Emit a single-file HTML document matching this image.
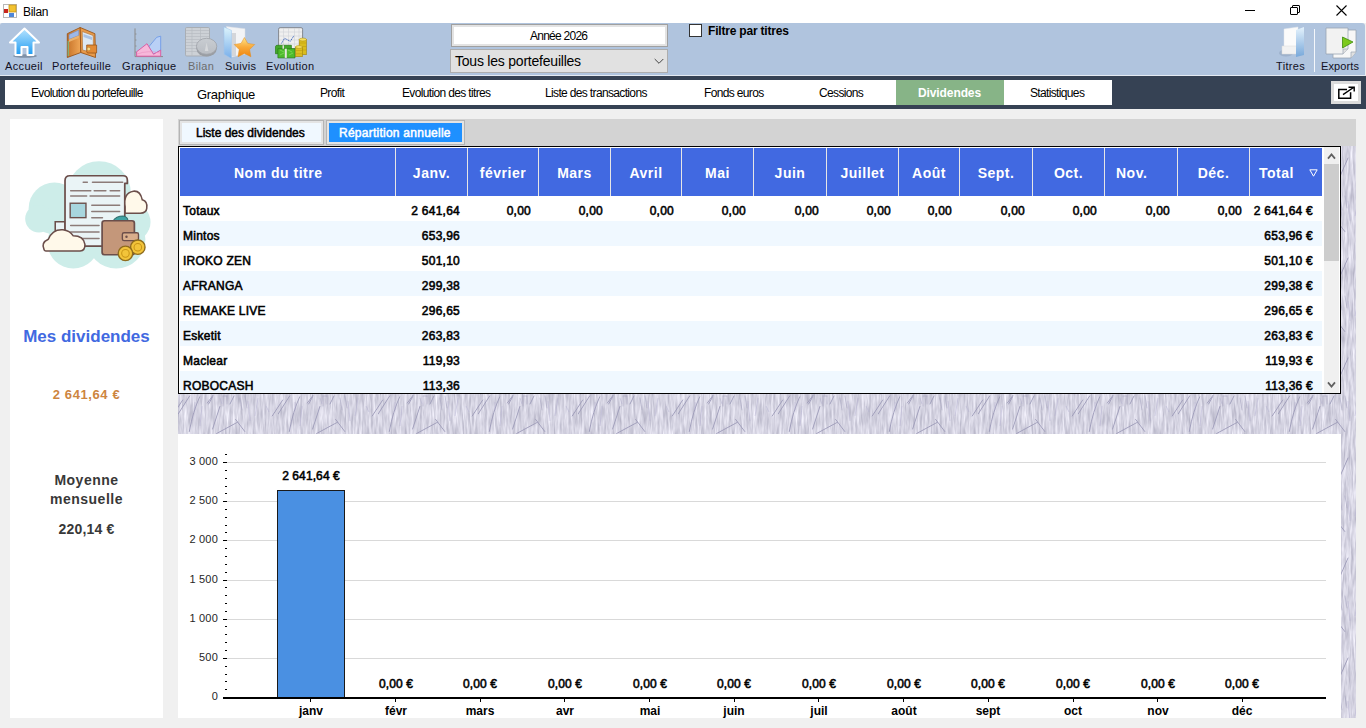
<!DOCTYPE html>
<html><head><meta charset="utf-8">
<style>
*{margin:0;padding:0;box-sizing:border-box}
html,body{width:1366px;height:728px;overflow:hidden;background:#F0F0F0;font-family:"Liberation Sans",sans-serif;position:relative}
.a{position:absolute}
.tl{top:59px;font-size:11px;line-height:14px;color:#101024;white-space:nowrap;letter-spacing:0.35px}
.tt{top:80px;height:25px;line-height:27px;font-size:12px;color:#000;white-space:nowrap;letter-spacing:-0.65px}
.tex{background:#D5D3E6}
.hd{height:48px;line-height:50px;font-size:14px;font-weight:bold;color:#fff;white-space:nowrap;letter-spacing:0.5px}
.cl{height:25px;line-height:31px;font-size:12px;color:#000;white-space:nowrap;-webkit-text-stroke:0.55px #000;letter-spacing:0.25px}
.yl{width:100px;text-align:right;font-size:11px;line-height:14px;color:#262626;white-space:nowrap;letter-spacing:0.2px}
.xl{width:100px;text-align:center;font-size:12px;line-height:14px;font-weight:bold;color:#000;white-space:nowrap}
.vl{width:100px;text-align:center;font-size:12px;line-height:14px;color:#000;white-space:nowrap;-webkit-text-stroke:0.55px #000;letter-spacing:0.1px}

</style></head><body>
<!-- TITLE BAR -->
<div class="a" style="left:0;top:0;width:1366px;height:23px;background:#fff"></div>
<svg class="a" style="left:3px;top:4px" width="14" height="14" viewBox="0 0 14 14">
<rect x="0.5" y="0.5" width="13" height="13" fill="#fff" stroke="#B8B8B8"/>
<rect x="6" y="1" width="7" height="7" fill="#F2C230" stroke="#C8961A" stroke-width="0.8"/>
<rect x="1" y="5" width="4" height="4" fill="#C8261E"/>
<rect x="6" y="9" width="5" height="4" fill="#4E86D8"/>
</svg>
<div class="a" style="left:23px;top:5px;font-size:12px;line-height:15px;color:#000;letter-spacing:-0.3px">Bilan</div>
<div class="a" style="left:1245px;top:10px;width:10px;height:1px;background:#000"></div>
<div class="a" style="left:1292px;top:5px;width:8px;height:8px;border:1px solid #000;border-radius:1px"></div>
<div class="a" style="left:1290px;top:7px;width:8px;height:8px;border:1px solid #000;background:#fff;border-radius:1px"></div>
<svg class="a" style="left:1336px;top:5px" width="11" height="11" viewBox="0 0 11 11"><path d="M0.5 0.5L10.5 10.5M10.5 0.5L0.5 10.5" stroke="#000" stroke-width="1.1"/></svg>

<!-- TOOLBAR -->
<div class="a" style="left:0;top:23px;width:1365px;height:52px;background:#B0C4DE;border-radius:2px 3px 0 0"></div>
<div class="a" style="left:0;top:75px;width:1366px;height:1px;background:#E4EAF2"></div>
<div class="a tl" style="left:5px">Accueil</div>
<div class="a tl" style="left:52px">Portefeuille</div>
<div class="a tl" style="left:122px">Graphique</div>
<div class="a tl" style="left:188px;color:#6D6D6D">Bilan</div>
<div class="a tl" style="left:225px">Suivis</div>
<div class="a tl" style="left:266px">Evolution</div>
<div class="a tl" style="left:1276px">Titres</div>
<div class="a tl" style="left:1321px;letter-spacing:0.1px">Exports</div>
<div class="a" style="left:1314px;top:29px;width:1px;height:43px;background:#F4F7FB"></div>
<!-- house -->
<svg class="a" style="left:8px;top:27px" width="33" height="31" viewBox="0 0 33 31">
<defs><linearGradient id="hg" x1="0" y1="0" x2="0" y2="1"><stop offset="0" stop-color="#B8E4FF"/><stop offset="1" stop-color="#1F9CF2"/></linearGradient></defs>
<ellipse cx="17" cy="29" rx="12" ry="1.8" fill="#5F6F84" opacity="0.6"/>
<path d="M16.5 1.5L31 15.5H25.5V28H19.5V20H13.5V28H7.5V15.5H2Z" fill="url(#hg)" stroke="#fff" stroke-width="2" stroke-linejoin="round"/>
</svg>
<!-- wallet -->
<svg class="a" style="left:66px;top:27px" width="32" height="32" viewBox="0 0 32 32">
<defs><linearGradient id="wg" x1="0" y1="0" x2="1" y2="0"><stop offset="0" stop-color="#C8742A"/><stop offset="1" stop-color="#F0A858"/></linearGradient></defs>
<path d="M1.3 6.7L14.2 0.5L14.8 25.5L1.3 30.5Z" fill="url(#wg)" stroke="#9A5518" stroke-width="0.9" stroke-linejoin="round"/>
<path d="M14.2 0.5L28.9 6.7L29.5 30.5L14.8 25.5Z" fill="#E89A4A" stroke="#9A5518" stroke-width="0.9" stroke-linejoin="round"/>
<path d="M3 7.5L12.8 3V8.5L3 12.5Z" fill="#9DB8E8" stroke="#6A7FB0" stroke-width="0.5"/>
<path d="M3 12.5L12.8 8.5V11L3 15Z" fill="#E9B26E"/>
<path d="M2.3 14V29" stroke="#7FB07A" stroke-width="1.3"/>
<path d="M16.2 4.5L27.2 8.5L27.5 26L16.6 23Z" fill="#DDE8F3" stroke="#B07840" stroke-width="0.7"/>
<path d="M17.5 7L26 10V13L17.5 10Z" fill="#A9C2E4"/>
<path d="M20.7 18H30.6V26H22Q20.7 26 20.7 24.5Z" fill="#E38A34" stroke="#9A5518" stroke-width="0.8"/>
<circle cx="22.8" cy="22" r="1.8" fill="#F4D88A" stroke="#B08030" stroke-width="0.5"/>
</svg>
<!-- graphique -->
<svg class="a" style="left:134px;top:28px" width="30" height="30" viewBox="0 0 30 30">
<path d="M1 0.4V28.6H29" stroke="#8A8A8A" stroke-width="1" fill="none"/>
<path d="M1 6H2.5M1 12H2.5M1 18H2.5M1 24H2.5" stroke="#8A8A8A" stroke-width="0.8"/>
<path d="M14.6 19L22.7 9.3L26.7 8.2V22.2L19.5 26.2Z" fill="#B9D0F6" stroke="#6F9BE6" stroke-width="0.9" stroke-linejoin="round"/>
<path d="M2.6 23.8L13 15.7L19.5 26.2L26.7 22.2V28.2H2.6Z" fill="#F6B8DA" stroke="#D9559E" stroke-width="0.9" stroke-linejoin="round"/>
<path d="M3 26Q14 22 26 25" stroke="#E98FC0" stroke-width="0.6" fill="none"/>
</svg>
<!-- bilan (grayed) -->
<svg class="a" style="left:185px;top:27px" width="33" height="31" viewBox="0 0 33 31">
<defs><linearGradient id="bg1" x1="0" y1="0" x2="0" y2="1"><stop offset="0" stop-color="#C9CDD2"/><stop offset="1" stop-color="#B9BDC3"/></linearGradient></defs>
<rect x="0.5" y="0.5" width="24" height="28.5" rx="1.2" fill="#CDD1D6" stroke="#A6AAB0" stroke-width="0.9"/>
<path d="M1 3.5H24M1 6.5H24M1 9.5H24M1 12.5H24M1 15.5H24M1 18.5H24M1 21.5H24M1 24.5H24M7 1V29M15.5 1V29" stroke="#B8BCC2" stroke-width="0.7"/>
<ellipse cx="21.6" cy="21.5" rx="10.2" ry="8" fill="#9A9EA4"/>
<ellipse cx="21.6" cy="19.3" rx="10.2" ry="8" fill="url(#bg1)" stroke="#9EA2A8" stroke-width="0.8"/>
<path d="M21.6 15.5L19.8 24H23.4Z" fill="#D6D8DB"/>
</svg>
<!-- suivis -->
<svg class="a" style="left:223px;top:26px" width="33" height="34" viewBox="0 0 33 34">
<defs><linearGradient id="sg1" x1="0" y1="0" x2="0" y2="1"><stop offset="0" stop-color="#DDF4FC"/><stop offset="1" stop-color="#78AEEA"/></linearGradient>
<linearGradient id="sg2" x1="0" y1="0" x2="0" y2="1"><stop offset="0" stop-color="#FFE68A"/><stop offset="0.5" stop-color="#F9A93A"/><stop offset="1" stop-color="#EE8510"/></linearGradient></defs>
<path d="M3.3 0.6L22 2.7V28L8.5 31Z" fill="#F3F4F6" stroke="#DADDE2" stroke-width="0.5"/>
<path d="M8.5 7H13V30H8.5Z" fill="#D4D6DA"/>
<path d="M0.9 0.9L8.5 4.4V32.6L1.2 28.2Z" fill="url(#sg1)" stroke="#9CC4EE" stroke-width="0.5"/>
<path d="M21.4 11.5L24.7 17.4L31.7 18.5L26.6 23.6L27.9 30.8L21.4 27.4L15 30.8L16.2 23.6L11.2 18.5L18.1 17.4Z" fill="url(#sg2)" stroke="#E38C1E" stroke-width="0.5" stroke-linejoin="round"/>
</svg>
<!-- evolution -->
<svg class="a" style="left:275px;top:27px" width="33" height="32" viewBox="0 0 33 32">
<rect x="3.6" y="0.7" width="24" height="21" rx="1.5" fill="#EFEFEF" stroke="#7A7E84" stroke-width="0.9"/>
<path d="M4 5H27M4 9H27M4 13H27M4 17H27M8.5 1V21M13.5 1V21M19.5 1V21M24 1V21" stroke="#CFD2D6" stroke-width="0.6"/>
<path d="M6.4 16.5L9.6 11.3L15.3 14.3L18.8 8.9" stroke="#4A6FC0" stroke-width="1" stroke-dasharray="1.4 0.6" fill="none"/>
<path d="M0.4 19.5Q1 18.3 2 18.3H16.4V26.7H0.4Z" fill="#43A82A" stroke="#2A7A18" stroke-width="0.7"/>
<path d="M2.9 21.7H20V30.9H2.9Z" fill="#4DBB2C" stroke="#2A7A18" stroke-width="0.7"/>
<path d="M5 23L9 25M13 23L17 25M5 28L9 26M14 28L18 26" stroke="#7FDA5A" stroke-width="0.8"/>
<path d="M9.8 21.7H11.8V30.9H9.8Z" fill="#E8E8E0"/>
<path d="M7.5 18.3H9V21.7H7.5Z" fill="#E0E0D8"/>
<rect x="24.2" y="12.5" width="7.2" height="15.2" fill="#D9BC1C" stroke="#A08410" stroke-width="0.6"/>
<ellipse cx="27.8" cy="12.5" rx="3.6" ry="1.5" fill="#F6E060" stroke="#A08410" stroke-width="0.5"/>
<path d="M24.2 16H31.4M24.2 19.5H31.4M24.2 23H31.4" stroke="#B8980E" stroke-width="0.5"/>
<rect x="20.5" y="20" width="6.9" height="9.7" fill="#DDBE20" stroke="#A08410" stroke-width="0.6"/>
<ellipse cx="23.95" cy="20" rx="3.45" ry="1.4" fill="#F6E060" stroke="#A08410" stroke-width="0.5"/>
<path d="M20.5 23.5H27.4M20.5 26.8H27.4" stroke="#B8980E" stroke-width="0.5"/>
</svg>
<!-- titres -->
<svg class="a" style="left:1275px;top:26px" width="31" height="33" viewBox="0 0 31 33">
<defs><linearGradient id="tg" x1="0" y1="0" x2="0" y2="1"><stop offset="0" stop-color="#E4F2FC"/><stop offset="1" stop-color="#78A8DA"/></linearGradient></defs>
<ellipse cx="11" cy="27" rx="7" ry="3.5" fill="#7F93AD" opacity="0.35"/>
<path d="M9 3L23 1V22H9Z" fill="#FBFBFB" stroke="#E2E6EA" stroke-width="0.5"/>
<path d="M7 20H22V28H7Z" fill="#F2F2F2" stroke="#DADADA" stroke-width="0.5"/>
<path d="M21 4L29 1V29L21 31Z" fill="url(#tg)"/>
</svg>
<!-- exports -->
<svg class="a" style="left:1325px;top:27px" width="33" height="32" viewBox="0 0 33 32">
<path d="M8 3H31V25L26 31H8Z" fill="#F7F7F7" stroke="#9AA5B2" stroke-width="0.8"/>
<path d="M1 1H23V22L18 27H1Z" fill="#F2F2F2" stroke="#9AA5B2" stroke-width="0.8"/>
<path d="M18 27V22H23" fill="#E0E0E0" stroke="#9AA5B2" stroke-width="0.7"/>
<path d="M26 31V25H31" fill="#E0E0E0" stroke="#9AA5B2" stroke-width="0.7"/>
<path d="M17.5 10L28 15L17.5 21Z" fill="#7BC91C" stroke="#3E8A10" stroke-width="0.8"/>
</svg>
<!-- year textbox -->
<div class="a" style="left:451px;top:24px;width:217px;height:23px;border:1px solid #A0A0A0;background:#fff;box-shadow:inset 0 0 0 2px #E3E3E3"></div>
<div class="a" style="left:530px;top:29px;font-size:12px;line-height:15px;letter-spacing:-0.75px;color:#000">Année 2026</div>
<!-- combo -->
<div class="a" style="left:450px;top:49px;width:218px;height:24px;border:1px solid #ADADAD;background:#E1E1E1"></div>
<div class="a" style="left:455px;top:53px;font-size:14px;line-height:17px;letter-spacing:-0.22px;color:#000;white-space:nowrap">Tous les portefeuilles</div>
<svg class="a" style="left:654px;top:58px" width="10" height="7" viewBox="0 0 10 7"><path d="M0.7 1L5 5.3L9.3 1" stroke="#444" stroke-width="1" fill="none"/></svg>
<!-- checkbox -->
<div class="a" style="left:689px;top:24px;width:13px;height:13px;border:1px solid #333;background:#fff"></div>
<div class="a" style="left:708px;top:24px;font-size:12px;line-height:14px;font-weight:bold;letter-spacing:-0.2px;color:#000;white-space:nowrap">Filtre par titres</div>

<!-- DARK BAR + TABS -->
<div class="a" style="left:0;top:76px;width:1366px;height:33px;background:#364254"></div>
<div class="a" style="left:5px;top:80px;width:1107px;height:25px;background:#fff"></div>
<div class="a" style="left:896px;top:80px;width:108px;height:25px;background:#87B487"></div>
<div class="a tt" style="left:31px">Evolution du portefeuille</div>
<div class="a tt" style="left:197px;font-size:13px;letter-spacing:-0.3px;top:81px">Graphique</div>
<div class="a tt" style="left:320px">Profit</div>
<div class="a tt" style="left:402px">Evolution des titres</div>
<div class="a tt" style="left:545px">Liste des transactions</div>
<div class="a tt" style="left:704px">Fonds euros</div>
<div class="a tt" style="left:819px">Cessions</div>
<div class="a tt" style="left:918px;color:#fff;font-weight:bold;letter-spacing:-0.1px">Dividendes</div>
<div class="a tt" style="left:1030px">Statistiques</div>
<!-- export btn -->
<div class="a" style="left:1331px;top:81px;width:30px;height:23px;background:#fff;border:3px solid #DCDCDC"></div>
<svg class="a" style="left:1337px;top:86px" width="19" height="14" viewBox="0 0 19 14">
<path d="M10 3.5H1.8V12.2H13.6V6.2" stroke="#000" stroke-width="1.5" fill="none"/>
<path d="M6 8.7L16.5 1.5M11.5 1.3H17.2V5.6" stroke="#000" stroke-width="1.4" fill="none"/>
</svg>
<div class="a" style="left:10px;top:119px;width:153px;height:599px;background:#fff"></div>
<svg class="a" style="left:20px;top:150px" width="140" height="125" viewBox="0 0 815 728">
<g fill="#CDEDE9">
<circle cx="460" cy="250" r="185"/><circle cx="200" cy="340" r="150"/><circle cx="110" cy="400" r="80"/>
<circle cx="310" cy="540" r="150"/><circle cx="560" cy="520" r="170"/><circle cx="650" cy="420" r="110"/>
</g>
<path d="M205 418H262V470H205Z" fill="#EAF4F6" stroke="#6B4E4A" stroke-width="9"/>
<path d="M290 150H600Q625 150 625 175V195H610V560H262V178Q262 150 290 150Z" fill="#EAF4F6" stroke="#6B4E4A" stroke-width="10" stroke-linejoin="round"/>
<g stroke="#8C7B78" stroke-width="9" stroke-linecap="round">
<path d="M368 188H392M422 188H598"/>
<path d="M295 237H412M432 237H500M525 237H580"/>
<path d="M295 268H388M408 268H580"/>
<path d="M418 322H580M418 358H580M418 395H480"/>
<path d="M295 440H460M295 478H460M295 515H460"/>
</g>
<rect x="292" y="310" width="92" height="84" fill="#A8D6DE" stroke="#6B4E4A" stroke-width="8"/>
<path d="M612 330Q600 250 660 240Q700 235 712 290Q745 300 738 340Q735 368 700 368H612Z" fill="#FFF9EA" stroke="#6B4E4A" stroke-width="9"/>
<path d="M140 580Q120 540 165 520Q190 460 250 465Q290 470 310 500Q370 500 378 550Q380 585 350 588H150Q140 588 140 580Z" fill="#FFF9EA" stroke="#6B4E4A" stroke-width="9"/>
<path d="M540 415Q560 385 600 385Q630 390 628 415Z" fill="#3FA3A3" stroke="#2F6F6F" stroke-width="6"/>
<rect x="478" y="412" width="188" height="198" rx="14" fill="#C4977A" stroke="#6B4E4A" stroke-width="10"/>
<rect x="596" y="482" width="94" height="46" rx="10" fill="#D9AE8C" stroke="#6B4E4A" stroke-width="8"/>
<circle cx="620" cy="505" r="7" fill="#6B4E4A"/>
<circle cx="686" cy="566" r="42" fill="#F2C43A" stroke="#8E6B1C" stroke-width="8"/>
<circle cx="686" cy="566" r="22" fill="none" stroke="#C99516" stroke-width="6"/>
<circle cx="614" cy="602" r="42" fill="#F2C43A" stroke="#8E6B1C" stroke-width="8"/>
<circle cx="614" cy="602" r="22" fill="none" stroke="#C99516" stroke-width="6"/>
</svg>
<div class="a" style="left:10px;top:327px;width:153px;text-align:center;font-size:17px;line-height:20px;font-weight:bold;color:#4169E1">Mes dividendes</div>
<div class="a" style="left:10px;top:387px;width:153px;text-align:center;font-size:13px;line-height:16px;font-weight:bold;letter-spacing:0.6px;color:#CD853F">2 641,64 €</div>
<div class="a" style="left:10px;top:471px;width:153px;text-align:center;font-size:14px;line-height:19px;font-weight:bold;letter-spacing:0.5px;color:#383838">Moyenne<br>mensuelle</div>
<div class="a" style="left:10px;top:521px;width:153px;text-align:center;font-size:14px;line-height:17px;font-weight:bold;letter-spacing:0.2px;color:#383838">220,14 €</div>

<svg class="a" style="left:178px;top:146px" width="1178" height="572"><defs>
<filter id="nz" x="0" y="0" width="100%" height="100%" color-interpolation-filters="sRGB"><feTurbulence type="fractalNoise" baseFrequency="0.45 0.05" numOctaves="3" seed="7"/>
<feColorMatrix type="matrix" values="0.34 0 0 0 0.668  0.34 0 0 0 0.662  0.30 0 0 0 0.738  0 0 0 0 1"/></filter>
<pattern id="tx" patternUnits="userSpaceOnUse" width="100" height="100">
<g stroke="#9C9AB8" stroke-width="1" fill="none" stroke-linecap="round" opacity="0.9">
<path d="M38.6 87.5L59.6 76.2M57.6 73.4L66.8 85.5"/>
<path d="M11.3 85.5Q15 65 21.7 50.8"/>
<path d="M34.6 83L41.9 60.5M30.6 58L34.6 50.8"/>
<path d="M94.2 70L104.7 54M-5.8 70L4.7 54"/>
<path d="M52 58L56 50M3 48L8 42M0 68.2L11.7 49.9M29.3 57L35.1 49.2"/><path d="M45 50V60M49 50V58M45 50H49M62 52L64 64M67 50L69 62" stroke-width="0.8" opacity="0.7"/>
<path d="M20 30L28 10M60 35L70 12M85 40L92 22M40 20L44 5"/>
</g>
<g stroke="#B3B0D0" stroke-width="0.7" fill="none" opacity="0.7"><path d="M58 22V34M17 56V64M42 52L44 58M88 60L91 66M24 60L22 80M70 55L72 75M80 52L77 70"/></g>
</pattern></defs><rect width="1178" height="572" filter="url(#nz)"/><rect width="1178" height="572" fill="url(#tx)"/></svg>
<div class="a" style="left:178px;top:119px;width:1178px;height:27px;background:#D3D3D3"></div>
<div class="a" style="left:179px;top:120px;width:145px;height:25px;border:1px solid #B4B4B4;box-shadow:inset 0 0 0 2px #E4E4E4;background:#F0F8FF"></div>
<div class="a" style="left:196px;top:126px;font-size:12px;line-height:14px;-webkit-text-stroke:0.5px #000;letter-spacing:0px;color:#000;white-space:nowrap">Liste des dividendes</div>
<div class="a" style="left:326px;top:120px;width:139px;height:25px;border:1px solid #B4B4B4;box-shadow:inset 0 0 0 2px #E4E4E4;background:#1E90FF"></div>
<div class="a" style="left:339px;top:126px;font-size:12px;line-height:14px;-webkit-text-stroke:0.5px #fff;letter-spacing:0.25px;color:#fff;white-space:nowrap">Répartition annuelle</div>
<div class="a" style="left:178px;top:146px;width:1163px;height:248px;border:1px solid #000;background:#fff;overflow:hidden"><div class="a" style="left:1px;top:1px;width:1142px;height:48px;background:#4169E1"></div><div class="a hd" style="left:55px;top:1px">Nom du titre</div><div class="a" style="left:216px;top:1px;width:1px;height:48px;background:#E6E6E6"></div><div class="a hd" style="left:217px;top:1px;width:71px;text-align:center">Janv.</div><div class="a" style="left:288px;top:1px;width:1px;height:48px;background:#E6E6E6"></div><div class="a hd" style="left:289px;top:1px;width:70px;text-align:center">février</div><div class="a" style="left:359px;top:1px;width:1px;height:48px;background:#E6E6E6"></div><div class="a hd" style="left:360px;top:1px;width:71px;text-align:center">Mars</div><div class="a" style="left:431px;top:1px;width:1px;height:48px;background:#E6E6E6"></div><div class="a hd" style="left:432px;top:1px;width:70px;text-align:center">Avril</div><div class="a" style="left:502px;top:1px;width:1px;height:48px;background:#E6E6E6"></div><div class="a hd" style="left:503px;top:1px;width:71px;text-align:center">Mai</div><div class="a" style="left:574px;top:1px;width:1px;height:48px;background:#E6E6E6"></div><div class="a hd" style="left:575px;top:1px;width:72px;text-align:center">Juin</div><div class="a" style="left:647px;top:1px;width:1px;height:48px;background:#E6E6E6"></div><div class="a hd" style="left:648px;top:1px;width:71px;text-align:center">Juillet</div><div class="a" style="left:719px;top:1px;width:1px;height:48px;background:#E6E6E6"></div><div class="a hd" style="left:720px;top:1px;width:60px;text-align:center">Août</div><div class="a" style="left:780px;top:1px;width:1px;height:48px;background:#E6E6E6"></div><div class="a hd" style="left:781px;top:1px;width:72px;text-align:center">Sept.</div><div class="a" style="left:853px;top:1px;width:1px;height:48px;background:#E6E6E6"></div><div class="a hd" style="left:854px;top:1px;width:71px;text-align:center">Oct.</div><div class="a" style="left:925px;top:1px;width:1px;height:48px;background:#E6E6E6"></div><div class="a hd" style="left:937px;top:1px">Nov.</div><div class="a" style="left:998px;top:1px;width:1px;height:48px;background:#E6E6E6"></div><div class="a hd" style="left:999px;top:1px;width:71px;text-align:center">Déc.</div><div class="a" style="left:1070px;top:1px;width:1px;height:48px;background:#E6E6E6"></div><div class="a hd" style="left:1080px;top:1px">Total</div><svg class="a" style="left:1130px;top:22px" width="9" height="8" viewBox="0 0 9 8"><path d="M0.8 0.8H8.2L4.5 7.2Z" fill="none" stroke="#fff" stroke-width="1"/></svg><div class="a" style="left:1px;top:49px;width:1142px;height:25px;background:#fff"></div><div class="a cl" style="left:4px;top:49px">Totaux</div><div class="a cl" style="left:81px;top:49px;width:200px;text-align:right">2 641,64</div><div class="a cl" style="left:152px;top:49px;width:200px;text-align:right">0,00</div><div class="a cl" style="left:224px;top:49px;width:200px;text-align:right">0,00</div><div class="a cl" style="left:295px;top:49px;width:200px;text-align:right">0,00</div><div class="a cl" style="left:367px;top:49px;width:200px;text-align:right">0,00</div><div class="a cl" style="left:440px;top:49px;width:200px;text-align:right">0,00</div><div class="a cl" style="left:512px;top:49px;width:200px;text-align:right">0,00</div><div class="a cl" style="left:573px;top:49px;width:200px;text-align:right">0,00</div><div class="a cl" style="left:646px;top:49px;width:200px;text-align:right">0,00</div><div class="a cl" style="left:718px;top:49px;width:200px;text-align:right">0,00</div><div class="a cl" style="left:791px;top:49px;width:200px;text-align:right">0,00</div><div class="a cl" style="left:863px;top:49px;width:200px;text-align:right">0,00</div><div class="a cl" style="left:934px;top:49px;width:200px;text-align:right">2 641,64 €</div><div class="a" style="left:1px;top:74px;width:1142px;height:25px;background:#F0F8FF"></div><div class="a cl" style="left:4px;top:74px">Mintos</div><div class="a cl" style="left:81px;top:74px;width:200px;text-align:right">653,96</div><div class="a cl" style="left:934px;top:74px;width:200px;text-align:right">653,96 €</div><div class="a" style="left:1px;top:99px;width:1142px;height:25px;background:#fff"></div><div class="a cl" style="left:4px;top:99px">IROKO ZEN</div><div class="a cl" style="left:81px;top:99px;width:200px;text-align:right">501,10</div><div class="a cl" style="left:934px;top:99px;width:200px;text-align:right">501,10 €</div><div class="a" style="left:1px;top:124px;width:1142px;height:25px;background:#F0F8FF"></div><div class="a cl" style="left:4px;top:124px">AFRANGA</div><div class="a cl" style="left:81px;top:124px;width:200px;text-align:right">299,38</div><div class="a cl" style="left:934px;top:124px;width:200px;text-align:right">299,38 €</div><div class="a" style="left:1px;top:149px;width:1142px;height:25px;background:#fff"></div><div class="a cl" style="left:4px;top:149px">REMAKE LIVE</div><div class="a cl" style="left:81px;top:149px;width:200px;text-align:right">296,65</div><div class="a cl" style="left:934px;top:149px;width:200px;text-align:right">296,65 €</div><div class="a" style="left:1px;top:174px;width:1142px;height:25px;background:#F0F8FF"></div><div class="a cl" style="left:4px;top:174px">Esketit</div><div class="a cl" style="left:81px;top:174px;width:200px;text-align:right">263,83</div><div class="a cl" style="left:934px;top:174px;width:200px;text-align:right">263,83 €</div><div class="a" style="left:1px;top:199px;width:1142px;height:25px;background:#fff"></div><div class="a cl" style="left:4px;top:199px">Maclear</div><div class="a cl" style="left:81px;top:199px;width:200px;text-align:right">119,93</div><div class="a cl" style="left:934px;top:199px;width:200px;text-align:right">119,93 €</div><div class="a" style="left:1px;top:224px;width:1142px;height:25px;background:#F0F8FF"></div><div class="a cl" style="left:4px;top:224px">ROBOCASH</div><div class="a cl" style="left:81px;top:224px;width:200px;text-align:right">113,36</div><div class="a cl" style="left:934px;top:224px;width:200px;text-align:right">113,36 €</div><div class="a" style="left:1px;top:249px;width:1142px;height:25px;background:#fff"></div><div class="a" style="left:1145px;top:0px;width:15px;height:246px;background:#F0F0F0"></div><div class="a" style="left:1145px;top:17px;width:15px;height:97px;background:#CDCDCD"></div><svg class="a" style="left:1147px;top:4px" width="11" height="10" viewBox="0 0 11 10"><path d="M2 7.6L5.5 3.4L9 7.6" stroke="#606060" stroke-width="1.8" fill="none"/></svg><svg class="a" style="left:1147px;top:233px" width="11" height="10" viewBox="0 0 11 10"><path d="M2 2.4L5.5 6.6L9 2.4" stroke="#606060" stroke-width="1.8" fill="none"/></svg></div><div class="a" style="left:178px;top:434px;width:1163px;height:284px;background:#fff;overflow:hidden"><div class="a yl" style="left:-60px;top:255px">0</div><div class="a" style="left:45px;top:263px;width:4px;height:1px;background:#000"></div><div class="a" style="left:49px;top:224px;width:1099px;height:1px;background:#D9D9D9"></div><div class="a yl" style="left:-60px;top:216px">500</div><div class="a" style="left:45px;top:224px;width:4px;height:1px;background:#000"></div><div class="a" style="left:49px;top:185px;width:1099px;height:1px;background:#D9D9D9"></div><div class="a yl" style="left:-60px;top:177px">1 000</div><div class="a" style="left:45px;top:185px;width:4px;height:1px;background:#000"></div><div class="a" style="left:49px;top:146px;width:1099px;height:1px;background:#D9D9D9"></div><div class="a yl" style="left:-60px;top:138px">1 500</div><div class="a" style="left:45px;top:146px;width:4px;height:1px;background:#000"></div><div class="a" style="left:49px;top:106px;width:1099px;height:1px;background:#D9D9D9"></div><div class="a yl" style="left:-60px;top:98px">2 000</div><div class="a" style="left:45px;top:106px;width:4px;height:1px;background:#000"></div><div class="a" style="left:49px;top:67px;width:1099px;height:1px;background:#D9D9D9"></div><div class="a yl" style="left:-60px;top:59px">2 500</div><div class="a" style="left:45px;top:67px;width:4px;height:1px;background:#000"></div><div class="a" style="left:49px;top:28px;width:1099px;height:1px;background:#D9D9D9"></div><div class="a yl" style="left:-60px;top:20px">3 000</div><div class="a" style="left:45px;top:28px;width:4px;height:1px;background:#000"></div><div class="a" style="left:47px;top:255px;width:2px;height:1px;background:#000"></div><div class="a" style="left:47px;top:247px;width:2px;height:1px;background:#000"></div><div class="a" style="left:47px;top:240px;width:2px;height:1px;background:#000"></div><div class="a" style="left:47px;top:232px;width:2px;height:1px;background:#000"></div><div class="a" style="left:47px;top:216px;width:2px;height:1px;background:#000"></div><div class="a" style="left:47px;top:208px;width:2px;height:1px;background:#000"></div><div class="a" style="left:47px;top:200px;width:2px;height:1px;background:#000"></div><div class="a" style="left:47px;top:192px;width:2px;height:1px;background:#000"></div><div class="a" style="left:47px;top:177px;width:2px;height:1px;background:#000"></div><div class="a" style="left:47px;top:169px;width:2px;height:1px;background:#000"></div><div class="a" style="left:47px;top:161px;width:2px;height:1px;background:#000"></div><div class="a" style="left:47px;top:153px;width:2px;height:1px;background:#000"></div><div class="a" style="left:47px;top:138px;width:2px;height:1px;background:#000"></div><div class="a" style="left:47px;top:130px;width:2px;height:1px;background:#000"></div><div class="a" style="left:47px;top:122px;width:2px;height:1px;background:#000"></div><div class="a" style="left:47px;top:114px;width:2px;height:1px;background:#000"></div><div class="a" style="left:47px;top:98px;width:2px;height:1px;background:#000"></div><div class="a" style="left:47px;top:91px;width:2px;height:1px;background:#000"></div><div class="a" style="left:47px;top:83px;width:2px;height:1px;background:#000"></div><div class="a" style="left:47px;top:75px;width:2px;height:1px;background:#000"></div><div class="a" style="left:47px;top:59px;width:2px;height:1px;background:#000"></div><div class="a" style="left:47px;top:52px;width:2px;height:1px;background:#000"></div><div class="a" style="left:47px;top:44px;width:2px;height:1px;background:#000"></div><div class="a" style="left:47px;top:36px;width:2px;height:1px;background:#000"></div><div class="a" style="left:47px;top:20px;width:2px;height:1px;background:#000"></div><div class="a" style="left:47px;top:20px;width:2px;height:1px;background:#000"></div><div class="a" style="left:45px;top:263px;width:1103px;height:2px;background:#000"></div><div class="a" style="left:132px;top:265px;width:1px;height:3px;background:#000"></div><div class="a xl" style="left:83px;top:270px">janv</div><div class="a" style="left:99px;top:56px;width:68px;height:207px;background:#4A90E2;border:1px solid #1A1A1A;border-bottom:none"></div><div class="a vl" style="left:83px;top:35px">2 641,64 €</div><div class="a" style="left:217px;top:265px;width:1px;height:3px;background:#000"></div><div class="a xl" style="left:168px;top:270px">févr</div><div class="a vl" style="left:168px;top:243px">0,00 €</div><div class="a" style="left:302px;top:265px;width:1px;height:3px;background:#000"></div><div class="a xl" style="left:252px;top:270px">mars</div><div class="a vl" style="left:252px;top:243px">0,00 €</div><div class="a" style="left:386px;top:265px;width:1px;height:3px;background:#000"></div><div class="a xl" style="left:337px;top:270px">avr</div><div class="a vl" style="left:337px;top:243px">0,00 €</div><div class="a" style="left:471px;top:265px;width:1px;height:3px;background:#000"></div><div class="a xl" style="left:422px;top:270px">mai</div><div class="a vl" style="left:422px;top:243px">0,00 €</div><div class="a" style="left:556px;top:265px;width:1px;height:3px;background:#000"></div><div class="a xl" style="left:506px;top:270px">juin</div><div class="a vl" style="left:506px;top:243px">0,00 €</div><div class="a" style="left:640px;top:265px;width:1px;height:3px;background:#000"></div><div class="a xl" style="left:591px;top:270px">juil</div><div class="a vl" style="left:591px;top:243px">0,00 €</div><div class="a" style="left:725px;top:265px;width:1px;height:3px;background:#000"></div><div class="a xl" style="left:676px;top:270px">août</div><div class="a vl" style="left:676px;top:243px">0,00 €</div><div class="a" style="left:810px;top:265px;width:1px;height:3px;background:#000"></div><div class="a xl" style="left:760px;top:270px">sept</div><div class="a vl" style="left:760px;top:243px">0,00 €</div><div class="a" style="left:895px;top:265px;width:1px;height:3px;background:#000"></div><div class="a xl" style="left:845px;top:270px">oct</div><div class="a vl" style="left:845px;top:243px">0,00 €</div><div class="a" style="left:979px;top:265px;width:1px;height:3px;background:#000"></div><div class="a xl" style="left:930px;top:270px">nov</div><div class="a vl" style="left:930px;top:243px">0,00 €</div><div class="a" style="left:1064px;top:265px;width:1px;height:3px;background:#000"></div><div class="a xl" style="left:1014px;top:270px">déc</div><div class="a vl" style="left:1014px;top:243px">0,00 €</div></div>
</body></html>
